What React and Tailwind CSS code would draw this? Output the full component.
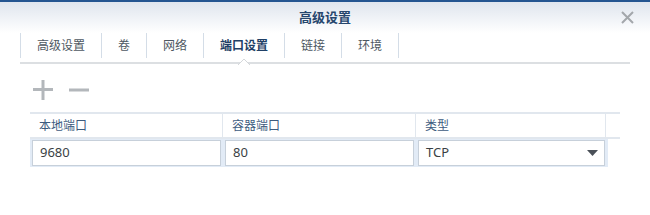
import { useState } from "react";

const tabs = ["高级设置", "卷", "网络", "端口设置", "链接", "环境"];

function CloseIcon() {
  return (
    <svg width="13" height="13" viewBox="0 0 13 13">
      <path d="M1 1 L12 12 M12 1 L1 12" stroke="#a3a7ab" strokeWidth="2" />
    </svg>
  );
}

export default function App() {
  const [active, setActive] = useState(3);

  return (
    <div
      className="w-[650px] h-[215px] bg-white flex flex-col overflow-hidden"
      style={{ fontFamily: '"Noto Sans", "Noto Sans CJK SC", sans-serif' }}
    >
      {/* Title bar */}
      <div className="relative h-[33px] border-t-2 border-[#245591] bg-gradient-to-b from-[#dfe5ee] to-white flex items-center justify-center">
        <span className="text-[13px] font-bold text-[#26466d]">高级设置</span>
        <button className="absolute right-[16px] top-[9px]">
          <CloseIcon />
        </button>
      </div>

      {/* Tabs */}
      <div className="mx-[20px] h-[31px] border-b-2 border-[#dcdfe2] flex items-start">
        {tabs.map((t, i) => (
          <div
            key={t}
            onClick={() => setActive(i)}
            className={`relative h-[25px] px-[16px] flex items-center text-[12px] border-[#d4dde7] border-r ${
              i === 0 ? "border-l" : ""
            } ${i === active ? "font-bold text-[#1f3f66]" : "text-[#4e5862]"}`}
          >
            {t}
            {i === active && (
              <svg
                className="absolute left-1/2 -translate-x-1/2 top-[26px]"
                width="12"
                height="6"
                viewBox="0 0 12 6"
              >
                <path d="M0 6 L6 0 L12 6 Z" fill="#ffffff" />
                <path d="M0 6 L6 0 L12 6" fill="none" stroke="#d4d7da" strokeWidth="1" />
              </svg>
            )}
          </div>
        ))}
      </div>

      {/* Toolbar */}
      <div className="ml-[33px] mt-[16px] h-[20px] flex items-center gap-[16px]">
        <svg width="20" height="20" viewBox="0 0 20 20">
          <rect x="0" y="8" width="20" height="3" fill="#b3b7bb" />
          <rect x="8.5" y="0" width="3" height="20" fill="#b3b7bb" />
        </svg>
        <svg width="20" height="20" viewBox="0 0 20 20">
          <rect x="0" y="8.5" width="20" height="3" fill="#b3b7bb" />
        </svg>
      </div>

      {/* Table */}
      <div className="ml-[30px] mt-[12px] w-[590px]">
        <div className="grid grid-cols-[193px_193px_190px_14px] h-[27px] border-t-2 border-b-2 border-[#e1e7ee]">
          {["本地端口", "容器端口", "类型", ""].map((h, i) => (
            <div
              key={i}
              className={`flex items-center pl-[9px] text-[12px] text-[#3d5b7e] ${
                i < 3 ? "border-r border-[#e1e7ee]" : ""
              }`}
            >
              {h}
            </div>
          ))}
        </div>
        <div className="grid grid-cols-[193px_193px_190px] h-[28px] w-[578px] bg-[#e2ebf6]">
          <div className="px-[2px] py-[1px]">
            <div className="h-[26px] bg-white border border-[#c7d0da] pl-[7px] flex items-center text-[13px] text-[#3a3f44]">
              9680
            </div>
          </div>
          <div className="px-[2px] py-[1px]">
            <div className="h-[26px] bg-white border border-[#c7d0da] pl-[7px] flex items-center text-[13px] text-[#3a3f44]">
              80
            </div>
          </div>
          <div className="pl-[2px] pr-[1px] py-[1px]">
            <div className="h-[26px] bg-white border border-[#c7d0da] pl-[7px] pr-[6px] flex items-center justify-between text-[13px] text-[#3a3f44]">
              <span>TCP</span>
              <svg width="11" height="6" viewBox="0 0 11 6">
                <path d="M0 0 L11 0 L5.5 6 Z" fill="#4a5058" />
              </svg>
            </div>
          </div>
        </div>
      </div>
    </div>
  );
}
